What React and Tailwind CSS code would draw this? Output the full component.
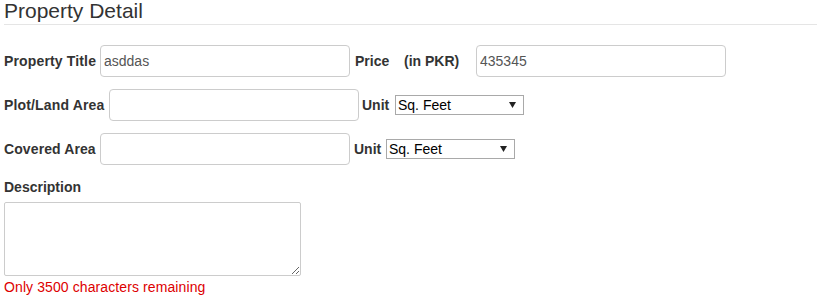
export default function App() {
  const font = { fontFamily: '"Liberation Sans", Arial, Helvetica, sans-serif' };
  const inputCls =
    "w-[250px] h-[32px] border border-[#cccccc] rounded-[4px] px-[3px] text-[14px] text-[#555555] bg-white outline-none shrink-0 font-normal";
  const Select = () => (
    <div className="w-[129px] h-[20px] border border-[#a9a9a9] bg-white flex items-center justify-between pl-[2px] pr-[7px] text-[14px] text-black shrink-0 font-normal">
      <span className="leading-[18px]">Sq. Feet</span>
      <svg width="7" height="6" viewBox="0 0 7 6">
        <path d="M0 0 L7 0 L3.5 6 Z" fill="#222" />
      </svg>
    </div>
  );
  return (
    <div className="w-[817px] h-[295px] bg-white text-[#333333] overflow-hidden" style={font}>
      <div className="pl-[4px] h-[24px] text-[21px] leading-[21px] text-[#333333]">Property Detail</div>
      <div className="ml-[4px] border-t border-[#e5e5e5]" />
      <div className="pl-[4px]">
        <div className="flex items-center h-[32px] mt-[20px] text-[14px] font-bold">
          <span className="w-[92px] whitespace-nowrap tracking-[0.15px]">Property Title</span>
          <input className={inputCls + " ml-[4px]"} defaultValue="asddas" />
          <span className="ml-[5px] w-[49px]">Price</span>
          <span className="w-[55px] whitespace-nowrap">(in PKR)</span>
          <input className={inputCls + " ml-[17px]"} defaultValue="435345" />
        </div>
        <div className="flex items-center h-[32px] mt-[12px] text-[14px] font-bold">
          <span className="w-[101px] whitespace-nowrap tracking-[0.15px]">Plot/Land Area</span>
          <input className={inputCls + " ml-[4px]"} />
          <span className="ml-[3px] w-[29px]">Unit</span>
          <div className="ml-[4px]">
            <Select />
          </div>
        </div>
        <div className="flex items-center h-[32px] mt-[12px] text-[14px] font-bold">
          <span className="w-[92px] whitespace-nowrap tracking-[0.1px]">Covered Area</span>
          <input className={inputCls + " ml-[4px]"} />
          <span className="ml-[4px] w-[29px]">Unit</span>
          <div className="ml-[3px]">
            <Select />
          </div>
        </div>
        <div className="mt-[12px] h-[20px] leading-[20px] text-[14px] font-bold">Description</div>
        <textarea className="block mt-[5px] w-[297px] h-[74px] border border-[#cccccc] rounded-[2px] outline-none" />
        <div className="h-[20px] leading-[20px] text-[14px] text-[#dd0000] mt-[1px] tracking-[0.1px]">
          Only 3500 characters remaining
        </div>
      </div>
    </div>
  );
}
